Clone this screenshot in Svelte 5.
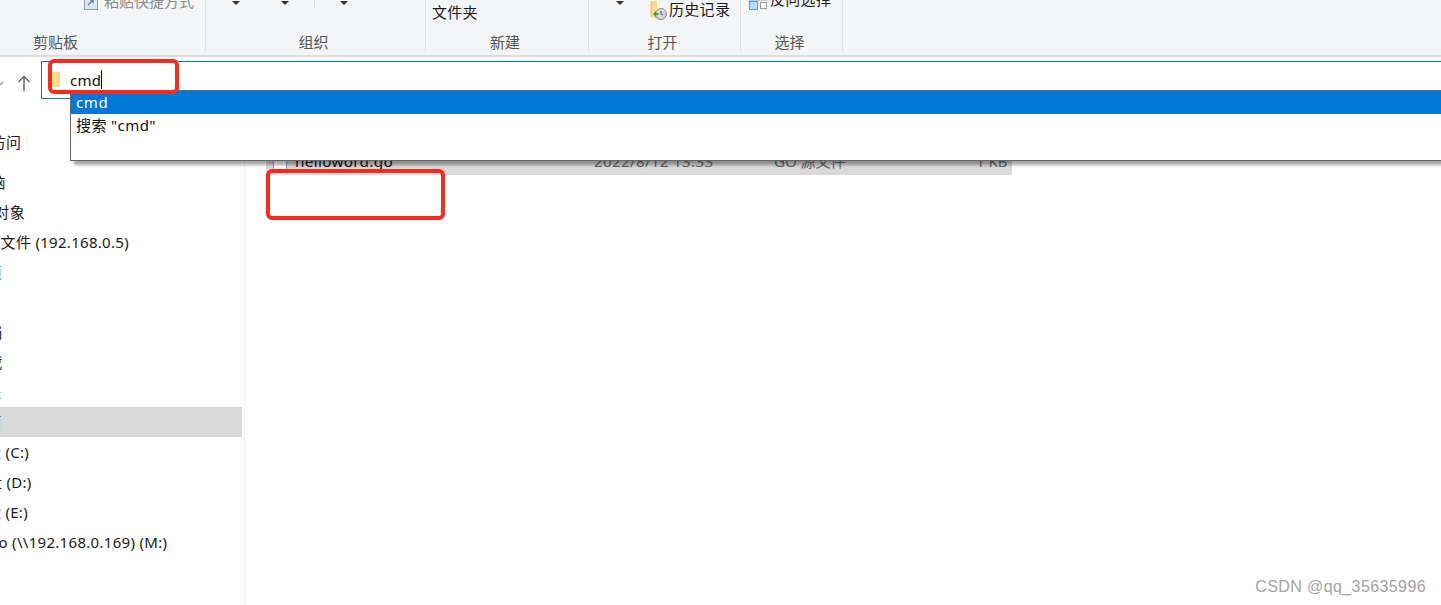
<script lang="ts">
	const navRows = [
		{ label: '快速访问', shift: -40, gap: 0 },
		{ label: '此电脑', shift: -40, gap: 10 },
		{ label: '3D 对象', shift: -30, gap: 0 },
		{ label: '共享文件 (192.168.0.5)', shift: -30, gap: 0 },
		{ label: '视频', shift: -29, gap: 0 },
		{ label: '图片', shift: -30, gap: 0 },
		{ label: '文档', shift: -28, gap: 0 },
		{ label: '下载', shift: -28, gap: 0 },
		{ label: '音乐', shift: -29, gap: 0 },
		{ label: '桌面', shift: -29, gap: 0, selected: true },
		{ label: '本地磁盘 (C:)', shift: -60, gap: 0 },
		{ label: '本地磁盘 (D:)', shift: -59, gap: 0 },
		{ label: '本地磁盘 (E:)', shift: -60, gap: 0 },
		{ label: 'go (\\\\192.168.0.169) (M:)', shift: -11, gap: 0 }
	];
</script>

<div class="page">
	<div class="ribbon">
		<section class="group g-clip">
			<div class="tools">
				<svg class="tool-icon" width="14" height="14" viewBox="0 0 14 14" aria-hidden="true">
					<rect x="0.5" y="0.5" width="13" height="13" fill="#dfe5ef" stroke="#8d9bb5" />
					<path d="M4 9l5-5M6 4h3v3" fill="none" stroke="#6f7f9c" stroke-width="1.4" />
				</svg>
				<span class="muted">粘贴快捷方式</span>
			</div>
			<div class="group-label">剪贴板</div>
		</section>
		<section class="group g-org">
			<div class="tools">
				<i class="caret c1"></i><i class="caret c2"></i><i class="tick"></i><i class="caret c3"></i>
			</div>
			<div class="group-label">组织</div>
		</section>
		<section class="group g-new">
			<div class="tools"><span class="folder-word">文件夹</span></div>
			<div class="group-label">新建</div>
		</section>
		<section class="group g-open">
			<div class="tools">
				<i class="caret c4"></i>
				<svg class="hist-icon" width="17" height="19" viewBox="0 0 17 19" aria-hidden="true">
					<path d="M1 0h6v8H7v10L1 16z" fill="#f6dc86" />
					<path d="M1 0v16" stroke="#e5c25c" />
					<circle cx="11" cy="13" r="5.5" fill="#d8d8d8" stroke="#8a8a8a" />
					<path d="M11 10v3l2 1" fill="none" stroke="#555" />
					<path d="M3 13l3-3v2h2.5v2H6v2z" fill="#3fa33f" />
				</svg>
				<span class="hist-word">历史记录</span>
			</div>
			<div class="group-label">打开</div>
		</section>
		<section class="group g-sel">
			<div class="tools">
				<svg class="sel-icon" width="18" height="10" viewBox="0 0 18 10" aria-hidden="true">
					<rect x="0.5" y="1.5" width="8" height="8" fill="#bcdcf6" stroke="#4a9be0" />
					<rect x="11.5" y="2.5" width="6" height="6" fill="#fff" stroke="#9a9a9a" />
					<path d="M0 0h18" stroke="#9a9a9a" />
				</svg>
				<span class="sel-word">反向选择</span>
			</div>
			<div class="group-label">选择</div>
		</section>
	</div>

	<div class="address-row">
		<svg class="back" width="3" height="8" viewBox="0 0 3 8" aria-hidden="true">
			<path d="M3 1L0 4" fill="none" stroke="#999" stroke-width="1.4" />
		</svg>
		<svg class="up" width="14" height="16" viewBox="0 0 14 16" aria-hidden="true">
			<path d="M7 16V1.5M1.5 7L7 1.5 12.5 7" fill="none" stroke="#777" stroke-width="1.7" />
		</svg>
		<div class="address-box">
			<i class="folder"></i>
			<span class="address-text">cmd</span><i class="text-caret"></i>
			<div class="suggest">
				<div class="suggest-item active">cmd</div>
				<div class="suggest-item">搜索 "cmd"</div>
			</div>
		</div>
	</div>

	<div class="main">
		<nav class="nav">
			{#each navRows as row}
				<div class="nav-row" class:selected={row.selected} style="margin-top: {row.gap}px">
					<span style="margin-left: {row.shift}px">{row.label}</span>
				</div>
			{/each}
		</nav>
		<div class="files">
			<div class="file-row">
				<svg class="file-icon" width="14" height="16" viewBox="0 0 14 16" aria-hidden="true">
					<path d="M.5.5h13v15H.5z" fill="#fff" stroke="#8d9bb5" />
				</svg>
				<span class="file-name">helloword.go</span>
				<span class="file-date">2022/8/12 13:33</span>
				<span class="file-type">GO 源文件</span>
				<span class="file-size">1 KB</span>
			</div>
		</div>
	</div>

	<div class="mark mark-top"></div>
	<div class="mark mark-bottom"></div>
	<div class="watermark">CSDN @qq_35635996</div>
</div>

<style>
	:global(body) {
		margin: 0;
		background: #fff;
	}

	.page {
		position: relative;
		width: 1441px;
		height: 605px;
		overflow: hidden;
		background: #fff;
		color: #1a1a1a;
		font-family: 'Noto Sans', 'Noto Sans CJK SC', sans-serif;
		font-size: 15px;
		letter-spacing: 0.3px;
	}

	.ribbon {
		display: flex;
		height: 55px;
		background: #f4f5f7;
		border-bottom: 2px solid #dcdcdc;
	}

	.group {
		display: flex;
		flex-direction: column;
		height: 52px;
		border-right: 1px solid #e2e3e5;
		box-sizing: border-box;
	}

	.g-clip { width: 206px; }
	.g-org { width: 220px; }
	.g-new { width: 163px; }
	.g-open { width: 152px; }
	.g-sel { width: 102px; }

	.tools {
		position: relative;
		height: 31px;
		overflow: hidden;
		display: flex;
		align-items: flex-start;
	}

	.group-label {
		text-align: center;
		color: #555;
		line-height: 20px;
		height: 21px;
		padding: 1px 4px 0 0;
		box-sizing: border-box;
		letter-spacing: 0;
	}

	.g-clip .group-label {
		padding-right: 94px;
	}

	.muted {
		color: #8a8a8a;
		margin: -10px 0 0 6px;
		letter-spacing: 0;
	}

	.tool-icon {
		margin: -4px 0 0 84px;
	}

	.caret {
		position: absolute;
		top: 1px;
		border: 4px solid transparent;
		border-top-color: #333;
		border-bottom: 0;
	}

	.c1 { left: 26px; }
	.c2 { left: 75px; }
	.c3 { left: 134px; }
	.c4 { left: 27px; }

	.tick {
		position: absolute;
		left: 108px;
		top: 0;
		width: 1px;
		height: 8px;
		background: #dcdcdc;
	}

	.folder-word {
		margin: 1px 0 0 6px;
		line-height: 22px;
	}

	.hist-icon {
		margin: 1px 0 0 61px;
		flex: none;
	}

	.hist-word {
		margin: -1px 0 0 2px;
		line-height: 20px;
	}

	.sel-icon {
		margin: 0 0 0 8px;
		flex: none;
	}

	.sel-word {
		margin: -11px 0 0 3px;
		line-height: 20px;
	}

	.address-row {
		display: flex;
		height: 43px;
		padding-top: 4px;
		box-sizing: border-box;
		align-items: flex-start;
	}

	.back {
		margin: 20px 0 0 0;
		flex: none;
	}

	.up {
		margin: 14px 0 0 14px;
		flex: none;
	}

	.address-box {
		position: relative;
		display: flex;
		align-items: center;
		flex: 1;
		height: 38px;
		margin: 0 -4px 0 10px;
		border: 1px solid #0078d7;
		box-sizing: border-box;
		padding: 0 0 0 10px;
	}

	.folder {
		width: 8px;
		height: 15px;
		margin-top: -2px;
		background: #f7dc8a;
	}

	.address-text {
		margin: -1px 0 0 10px;
		color: #111;
	}

	.text-caret {
		width: 1px;
		height: 19px;
		margin: -2px 0 0 0;
		background: #000;
	}

	.suggest {
		position: absolute;
		z-index: 3;
		left: 28px;
		right: 0;
		top: 28px;
		height: 71px;
		box-sizing: border-box;
		background: #fff;
		border: 1px solid #666;
		box-shadow: 4px 4px 3px rgba(0, 0, 0, 0.35);
	}

	.suggest-item {
		height: 23px;
		line-height: 23px;
		padding-left: 5px;
		color: #111;
		letter-spacing: 0.4px;
	}

	.suggest-item.active {
		background: #0078d7;
		color: #fff;
		letter-spacing: 0.6px;
	}

	.main {
		display: flex;
		height: 505px;
	}

	.nav {
		width: 245px;
		flex: none;
		box-sizing: border-box;
		border-right: 1px solid #f0f0f0;
		padding: 27px 2px 0 0;
		overflow: hidden;
	}

	.nav-row {
		height: 30px;
		line-height: 30px;
		white-space: nowrap;
	}

	.nav-row.selected {
		background: #d9d9d9;
	}

	.files {
		flex: 1;
		padding: 46px 0 0 21px;
	}

	.file-row {
		position: relative;
		display: flex;
		align-items: flex-end;
		width: 746px;
		height: 29px;
		background: #d9d9d9;
		line-height: 22px;
		padding-bottom: 3px;
		box-sizing: border-box;
	}

	.file-icon {
		position: absolute;
		left: 7px;
		top: 8px;
	}

	.file-name {
		margin-left: 29px;
		width: 299px;
		color: #111;
		font-size: 15.3px;
	}

	.file-date {
		width: 180px;
		color: #666;
		font-size: 15.2px;
	}

	.file-type {
		width: 190px;
		color: #666;
		letter-spacing: 0;
	}

	.file-size {
		color: #666;
		margin-left: 12px;
		letter-spacing: 0;
	}

	.mark {
		position: absolute;
		z-index: 5;
		box-sizing: border-box;
		border: 4px solid #fb2a1c;
		border-radius: 6px;
	}

	.mark-top {
		left: 48px;
		top: 59px;
		width: 131px;
		height: 35px;
	}

	.mark-bottom {
		left: 266px;
		top: 169px;
		width: 179px;
		height: 51px;
	}

	.watermark {
		position: absolute;
		right: 15px;
		top: 578px;
		color: #a3a3a3;
		font-family: 'Liberation Sans', sans-serif;
		font-size: 16px;
		letter-spacing: 0.4px;
	}
</style>
